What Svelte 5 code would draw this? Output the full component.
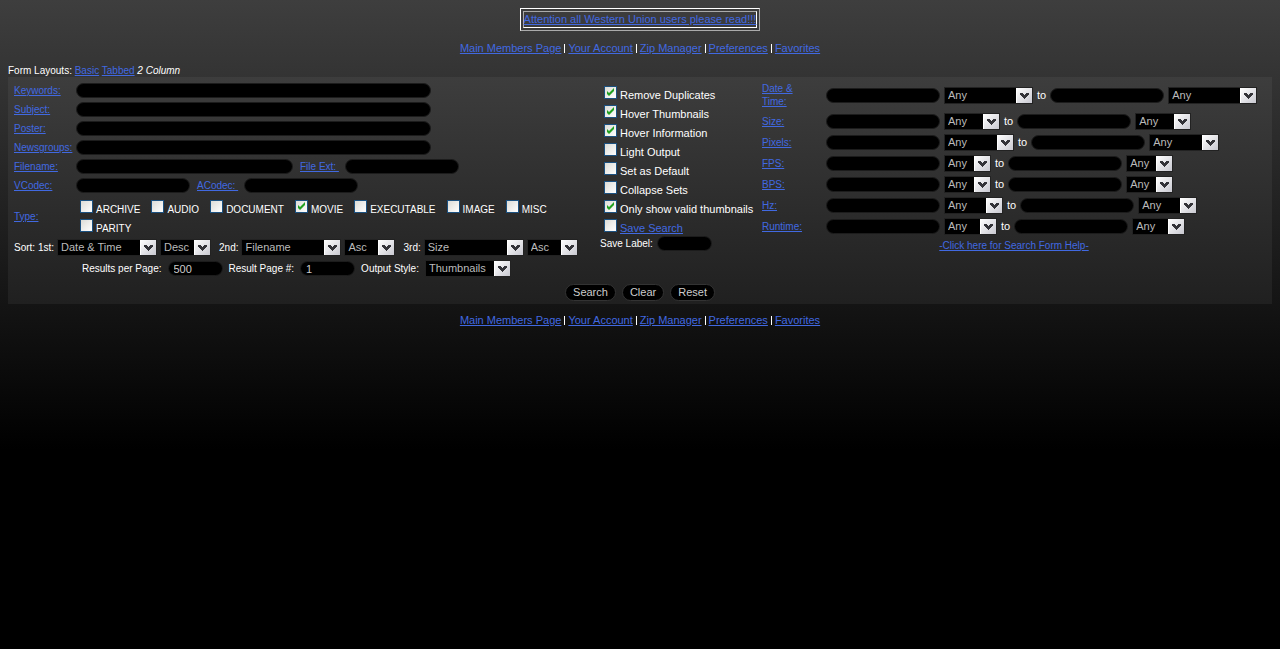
<script>
  const nav = ['Main Members Page', 'Your Account', 'Zip Manager', 'Preferences', 'Favorites'];
  const textFields = ['Keywords', 'Subject', 'Poster', 'Newsgroups'];
  const types = ['ARCHIVE', 'AUDIO', 'DOCUMENT', 'MOVIE', 'EXECUTABLE', 'IMAGE', 'MISC', 'PARITY'];
  const options = [
    ['Remove Duplicates', true],
    ['Hover Thumbnails', true],
    ['Hover Information', true],
    ['Light Output', false],
    ['Set as Default', false],
    ['Collapse Sets', false],
    ['Only show valid thumbnails', true]
  ];
  const sorts = [
    ['Sort: 1st:', 'Date & Time', 'Desc'],
    ['2nd:', 'Filename', 'Asc'],
    ['3rd:', 'Size', 'Asc']
  ];
  const ranges = [
    ['Date & Time', 89],
    ['Size', 56],
    ['Pixels', 70],
    ['FPS', 47],
    ['BPS', 47],
    ['Hz', 59],
    ['Runtime', 53]
  ];
</script>

{#snippet links()}
  <nav>
    {#each nav as item, i}{#if i > 0}<span class="bar"></span>{/if}<a href="#top">{item}</a>{/each}
  </nav>
{/snippet}

<div class="page">
  <div class="notice"><a href="#notice">Attention all Western Union users please read!!!</a></div>
  {@render links()}
  <div class="layouts">Form Layouts: <a href="#basic">Basic</a> <a href="#tabbed">Tabbed</a> <em>2 Column</em></div>

  <form onsubmit={(e) => e.preventDefault()}>
    <div class="columns">
      <div class="left">
        {#each textFields as name}
          <div class="row">
            <label class="name" for={name}><a href="#help">{name}:</a></label>
            <input class="long" type="text" id={name} />
          </div>
        {/each}
        <div class="row">
          <label class="name" for="filename"><a href="#help">Filename:</a></label>
          <input class="medium" type="text" id="filename" />
          <label class="second" for="ext"><a href="#help">File Ext:&nbsp;</a></label>
          <input class="short" type="text" id="ext" />
        </div>
        <div class="row">
          <label class="name" for="vcodec"><a href="#help">VCodec:</a></label>
          <input class="short" type="text" id="vcodec" />
          <label class="second" for="acodec"><a href="#help">ACodec:&nbsp;</a></label>
          <input class="short" type="text" id="acodec" />
        </div>
        <div class="types">
          <span class="name"><a href="#help">Type:</a></span>
          <div class="boxes">
            {#each types as type}
              <label class="check"><input type="checkbox" checked={type === 'MOVIE'} /><span>{type}</span></label>
            {/each}
          </div>
        </div>
        <div class="sorts">
          {#each sorts as [label, field, dir]}
            <div class="sort">
              <label for={'sort' + label}>{label}</label>
              <select class="field" id={'sort' + label}><option>{field}</option></select>
              <select class="direction" aria-label="{label} direction"><option>{dir}</option></select>
            </div>
          {/each}
        </div>
        <div class="paging">
          <label>Results per Page: <input class="tiny" type="text" value="500" /></label>
          <label>Result Page #: <input class="tiny" type="text" value="1" /></label>
          <label>Output Style: <select class="style"><option>Thumbnails</option></select></label>
        </div>
      </div>

      <div class="middle">
        {#each options as [label, on]}
          <label class="check"><input type="checkbox" checked={on} /><span>{label}</span></label>
        {/each}
        <div class="check">
          <input type="checkbox" id="save" /><label for="save"><a href="#save">Save Search</a></label>
        </div>
        <label class="save">Save Label:<input class="tiny" type="text" /></label>
      </div>

      <div class="right">
        {#each ranges as [name, width]}
          <div class="range">
            <label class="name" for={'from' + name}><a href="#help">{name}:</a></label>
            <input class="short" type="text" id={'from' + name} />
            <select aria-label="{name} from" style:width="{width}px"><option>Any</option></select>
            <span>to</span>
            <input class="short" type="text" aria-label="{name} to" />
            <select aria-label="{name} to unit" style:width="{width}px"><option>Any</option></select>
          </div>
        {/each}
        <a class="help" href="#formhelp">-Click here for Search Form Help-</a>
      </div>
    </div>
    <div class="actions">
      <button type="submit">Search</button>
      <button type="button">Clear</button>
      <button type="reset">Reset</button>
    </div>
  </form>
  {@render links()}
</div>

<style>
  :global(html) {
    background: linear-gradient(#3e3e3e 0, #000 450px) no-repeat #000;
    min-height: 100%;
  }
  .page {
    padding: 8px;
    display: flex;
    flex-direction: column;
    align-items: center;
    color: #fff;
    font: 11px/13px 'Liberation Sans', Arial, sans-serif;
    white-space: nowrap;
  }
  a {
    color: #4169e1;
    text-decoration: underline;
  }
  .notice {
    border: 1px solid;
    border-color: #fff #aaa #aaa #fff;
    padding: 2px;
  }
  .notice a {
    display: block;
    border: 1px solid;
    border-color: #aaa #fff #fff #aaa;
    padding: 1px 0;
  }
  nav {
    display: flex;
    align-items: center;
    margin-top: 11px;
  }
  .bar {
    width: 1px;
    height: 9px;
    margin: 0 3px;
    background: #fff;
  }
  .layouts {
    align-self: stretch;
    margin-top: 10px;
    font-size: 10px;
    line-height: 12px;
  }
  form {
    align-self: stretch;
    padding: 4px 6px 3px;
    background: linear-gradient(#3d3d3d, #202020);
  }
  form + :global(nav) {
    margin-top: 10px;
  }
  .columns {
    display: grid;
    grid-template-columns: 586fr 162fr 504fr;
  }
  .row {
    display: flex;
    align-items: center;
    height: 19px;
  }
  .name {
    flex: none;
    width: 62px;
    font-size: 10px;
  }
  .second {
    margin: 0 6px 0 7px;
    font-size: 10px;
  }
  input[type='text'] {
    box-sizing: border-box;
    height: 15px;
    margin: 0;
    padding: 0 5px;
    border: 1px solid #1c1c1c;
    border-radius: 8px;
    background: #000;
    color: #ccc;
    font: inherit;
  }
  input.long {
    width: 355px;
  }
  input.medium {
    width: 217px;
  }
  input.short {
    width: 114px;
  }
  input.tiny {
    width: 55px;
  }
  select {
    box-sizing: border-box;
    appearance: none;
    height: 17px;
    margin: 0;
    padding: 0 17px 0 3px;
    border: 1px solid #222;
    border-radius: 0;
    color: #bbb;
    font: inherit;
    background: #000 url("data:image/svg+xml,%3Csvg xmlns='http://www.w3.org/2000/svg' width='17' height='17'%3E%3ClinearGradient id='g' x2='1' y2='1'%3E%3Cstop stop-color='%23fff'/%3E%3Cstop offset='1' stop-color='%23c8c8d0'/%3E%3C/linearGradient%3E%3Cpath fill='%23aaa' d='M0 0h17v17H0z'/%3E%3Cpath fill='%23fff' d='M0 0h16v16H0z'/%3E%3Cpath fill='url(%23g)' d='M1 1h15v15H1z'/%3E%3Cpath fill='%23333338' d='M4 6h3v1h1v1h1V7h1V6h3v2h-1v1h-1v1h-1v1H9v1H8v-1H7v-1H6V9H5V8H4z'/%3E%3C/svg%3E") right center / 17px 17px no-repeat border-box;
  }
  select.field {
    width: 100px;
  }
  select.direction {
    width: 51px;
  }
  select.style {
    width: 86px;
  }
  .check {
    display: flex;
    align-items: flex-start;
    gap: 3px;
    height: 19px;
  }
  .check span,
  .check label {
    padding-top: 3px;
  }
  input[type='checkbox'] {
    box-sizing: border-box;
    appearance: none;
    flex: none;
    width: 13px;
    height: 13px;
    margin: 0;
    border: 1px solid #1c5180;
    background: linear-gradient(135deg, #dcdcd7, #fff);
  }
  input[type='checkbox']:checked {
    background: url("data:image/svg+xml,%3Csvg xmlns='http://www.w3.org/2000/svg' width='11' height='11'%3E%3Cpath fill='%2321a121' d='M2 4v3l2 2 5-5V1L4 6z'/%3E%3C/svg%3E") center no-repeat, linear-gradient(135deg, #dcdcd7, #fff);
  }
  .types {
    display: flex;
    align-items: center;
    height: 42px;
  }
  .boxes {
    display: flex;
    flex-wrap: wrap;
    column-gap: 11px;
    width: 490px;
    padding: 5px 0 0 4px;
    font-size: 10px;
  }
  .sorts,
  .sort,
  .paging,
  .paging label {
    display: flex;
    align-items: center;
    height: 21px;
  }
  .sorts {
    gap: 8px;
  }
  .sort {
    gap: 3px;
  }
  .sorts label,
  .paging label {
    font-size: 10px;
  }
  .paging input,
  .paging select {
    font-size: 11px;
  }
  .paging {
    gap: 6px;
    padding-left: 68px;
  }
  .paging label {
    gap: 6px;
  }
  .middle {
    padding-top: 5px;
  }
  .middle .check {
    padding-left: 4px;
  }
  .save {
    display: flex;
    align-items: center;
    gap: 4px;
    height: 11px;
    font-size: 10px;
  }
  .right {
    display: flex;
    flex-direction: column;
  }
  .range {
    display: flex;
    align-items: center;
    gap: 4px;
    min-height: 21px;
  }
  .range:first-child {
    padding: 1px 0 3px;
  }
  .range .name {
    box-sizing: border-box;
    width: 60px;
    padding-right: 16px;
    white-space: normal;
  }
  .help {
    align-self: center;
    margin-top: 2px;
    font-size: 10px;
  }
  .actions {
    display: flex;
    justify-content: center;
    gap: 6px;
    margin-top: 5px;
  }
  button {
    height: 17px;
    margin: 0;
    padding: 0 7px;
    border: 1px solid #333;
    border-radius: 9px;
    background: #000;
    color: #ccc;
    font: inherit;
  }
</style>
